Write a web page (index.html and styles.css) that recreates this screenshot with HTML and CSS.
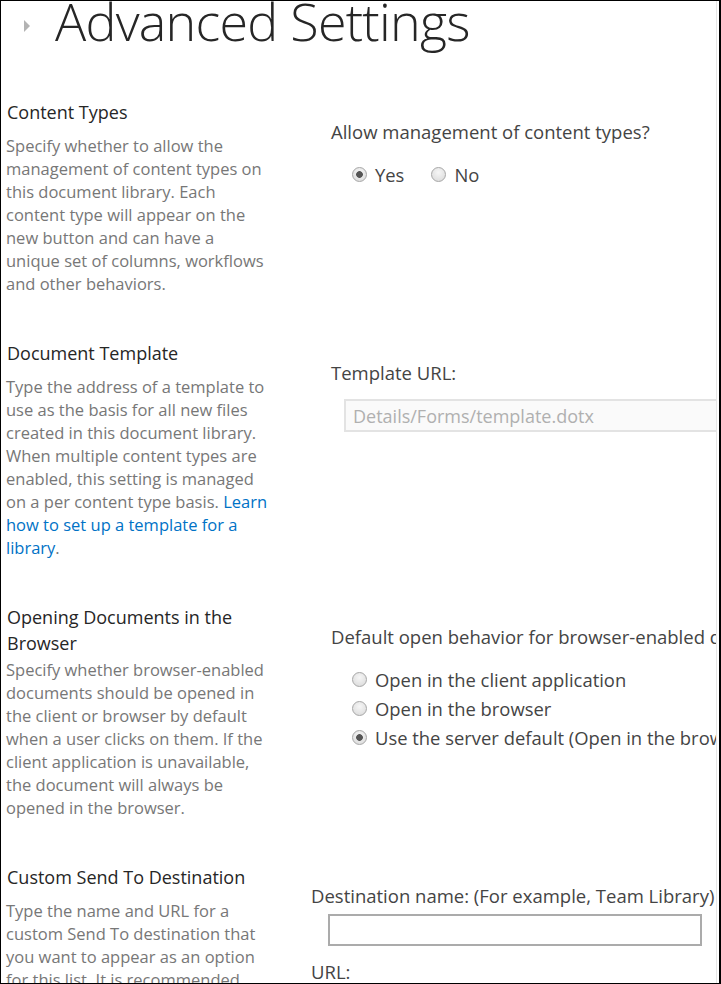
FILE: index.html
```html
<!DOCTYPE html>
<html lang="en">
<head>
<meta charset="utf-8">
<title>Advanced Settings</title>
<link rel="stylesheet" href="styles.css">
</head>
<body>
<div class="frame">
  <div class="page">
    <div class="title-row">
      <span class="arrow"></span>
      <h1 class="page-title">Advanced Settings</h1>
    </div>

    <section class="setting">
      <div class="desc-col">
        <h3 class="setting-title">Content Types</h3>
        <p class="setting-desc">Specify whether to allow the<br>management of content types on<br>this document library. Each<br>content type will appear on the<br>new button and can have a<br>unique set of columns, workflows<br>and other behaviors.</p>
      </div>
      <div class="field-col">
        <div class="field-label">Allow management of content types?</div>
        <div class="radio-line">
          <label class="radio"><input type="radio" name="ct" checked><span>Yes</span></label>
          <label class="radio"><input type="radio" name="ct"><span>No</span></label>
        </div>
      </div>
    </section>

    <section class="setting">
      <div class="desc-col">
        <h3 class="setting-title">Document Template</h3>
        <p class="setting-desc">Type the address of a template to<br>use as the basis for all new files<br>created in this document library.<br>When multiple content types are<br>enabled, this setting is managed<br>on a per content type basis. <a href="#">Learn<br>how to set up a template for a<br>library</a>.</p>
      </div>
      <div class="field-col">
        <div class="field-label">Template URL:</div>
        <input class="text-input text-input--disabled" type="text" value="Details/Forms/template.dotx" disabled>
      </div>
    </section>

    <section class="setting">
      <div class="desc-col">
        <h3 class="setting-title">Opening Documents in the<br>Browser</h3>
        <p class="setting-desc">Specify whether browser-enabled<br>documents should be opened in<br>the client or browser by default<br>when a user clicks on them. If the<br>client application is unavailable,<br>the document will always be<br>opened in the browser.</p>
      </div>
      <div class="field-col">
        <div class="field-label nowrap">Default open behavior for browser-enabled documents:</div>
        <div class="radio-list">
          <label class="radio"><input type="radio" name="ob"><span>Open in the client application</span></label>
          <label class="radio"><input type="radio" name="ob"><span>Open in the browser</span></label>
          <label class="radio"><input type="radio" name="ob" checked><span class="nowrap">Use the server default (Open in the browser)</span></label>
        </div>
      </div>
    </section>

    <section class="setting setting--narrow">
      <div class="desc-col">
        <h3 class="setting-title">Custom Send To Destination</h3>
        <p class="setting-desc">Type the name and URL for a<br>custom Send To destination that<br>you want to appear as an option<br>for this list. It is recommended<br>that you choose a short name for<br>the destination.</p>
      </div>
      <div class="field-col">
        <div class="field-label nowrap">Destination name: (For example, Team Library)</div>
        <input class="text-input text-input--dest" type="text">
        <div class="field-label field-label--url">URL:</div>
      </div>
    </section>
  </div>
</div>
</body>
</html>
```

FILE: styles.css
```css
* { box-sizing: border-box; }

html, body {
  margin: 0;
  padding: 0;
  background: #fff;
}

body {
  font-family: "Open Sans", "Noto Sans", "Liberation Sans", sans-serif;
  color: #444;
}

.frame {
  width: 721px;
  height: 984px;
  border: 1px solid #000;
  border-right-width: 2px;
  overflow: hidden;
}

.page {
  width: 716px;
  height: 100%;
  overflow: hidden;
  border-right: 1px solid #e6e6e6;
}

.title-row {
  display: flex;
  align-items: flex-start;
  height: 44px;
  margin-top: -2px;
}

.arrow {
  width: 0;
  height: 0;
  margin: 21px 0 0 23px;
  border-top: 6px solid transparent;
  border-bottom: 6px solid transparent;
  border-left: 6px solid #b3b3b3;
}

.page-title {
  margin: 0 0 0 25px;
  font-size: 52px;
  font-weight: 300;
  line-height: 44px;
  letter-spacing: -0.75px;
  color: #262626;
  white-space: nowrap;
}

.setting {
  display: grid;
  grid-template-columns: 325px 1fr;
  padding: 0 0 44px 5px;
}

.title-row + .setting {
  padding-top: 55px;
}

.setting--narrow {
  grid-template-columns: 305px 1fr;
}

.setting-title {
  margin: 0;
  min-height: 35px;
  padding: 1px 0 0.5px 1px;
  font-size: 18px;
  font-weight: 400;
  line-height: 26px;
  color: #262626;
  white-space: nowrap;
}

.setting-desc {
  margin: 0;
  padding-top: 1px;
  font-size: 16.5px;
  line-height: 23px;
  color: #777;
  white-space: nowrap;
}

.setting-desc a {
  color: #0072c6;
  text-decoration: none;
}

.field-col {
  padding-top: 21.5px;
  min-width: 0;
}

.field-label {
  font-size: 18.5px;
  line-height: 23px;
  color: #444;
}

.nowrap { white-space: nowrap; }

.radio-line {
  display: flex;
  gap: 27px;
  margin: 17px 0 0 21px;
}

.radio-list {
  display: flex;
  flex-direction: column;
  margin: 17px 0 0 21px;
}

.radio {
  display: flex;
  align-items: center;
  height: 29px;
  font-size: 18.4px;
  color: #444;
}

.radio input {
  appearance: none;
  -webkit-appearance: none;
  flex: none;
  width: 15px;
  height: 15px;
  margin: 0 8px 0 0;
  border: 1px solid #a6a6a6;
  border-radius: 50%;
  background: radial-gradient(circle at 50% 35%, #f6f6f6 0%, #d8d8d8 100%);
}

.radio input:checked {
  background:
    radial-gradient(circle, #555 0 3px, transparent 3.7px),
    radial-gradient(circle at 50% 35%, #f6f6f6 0%, #d8d8d8 100%);
}

.text-input {
  display: block;
  height: 33px;
  font-family: inherit;
  font-size: 18px;
  padding: 0 7px;
  outline: none;
}

.text-input--disabled {
  width: 374px;
  margin: 15.5px 0 0 13px;
  border: 2px solid #e3e3e3;
  background: #fafafa;
  color: #b0b0b0;
}

.text-input--dest {
  width: 374px;
  height: 32px;
  margin: 7px 0 0 17px;
  border: 2px solid #ababab;
  background: #fff;
  color: #444;
}

.field-label--url {
  margin-top: 14px;
}
```
